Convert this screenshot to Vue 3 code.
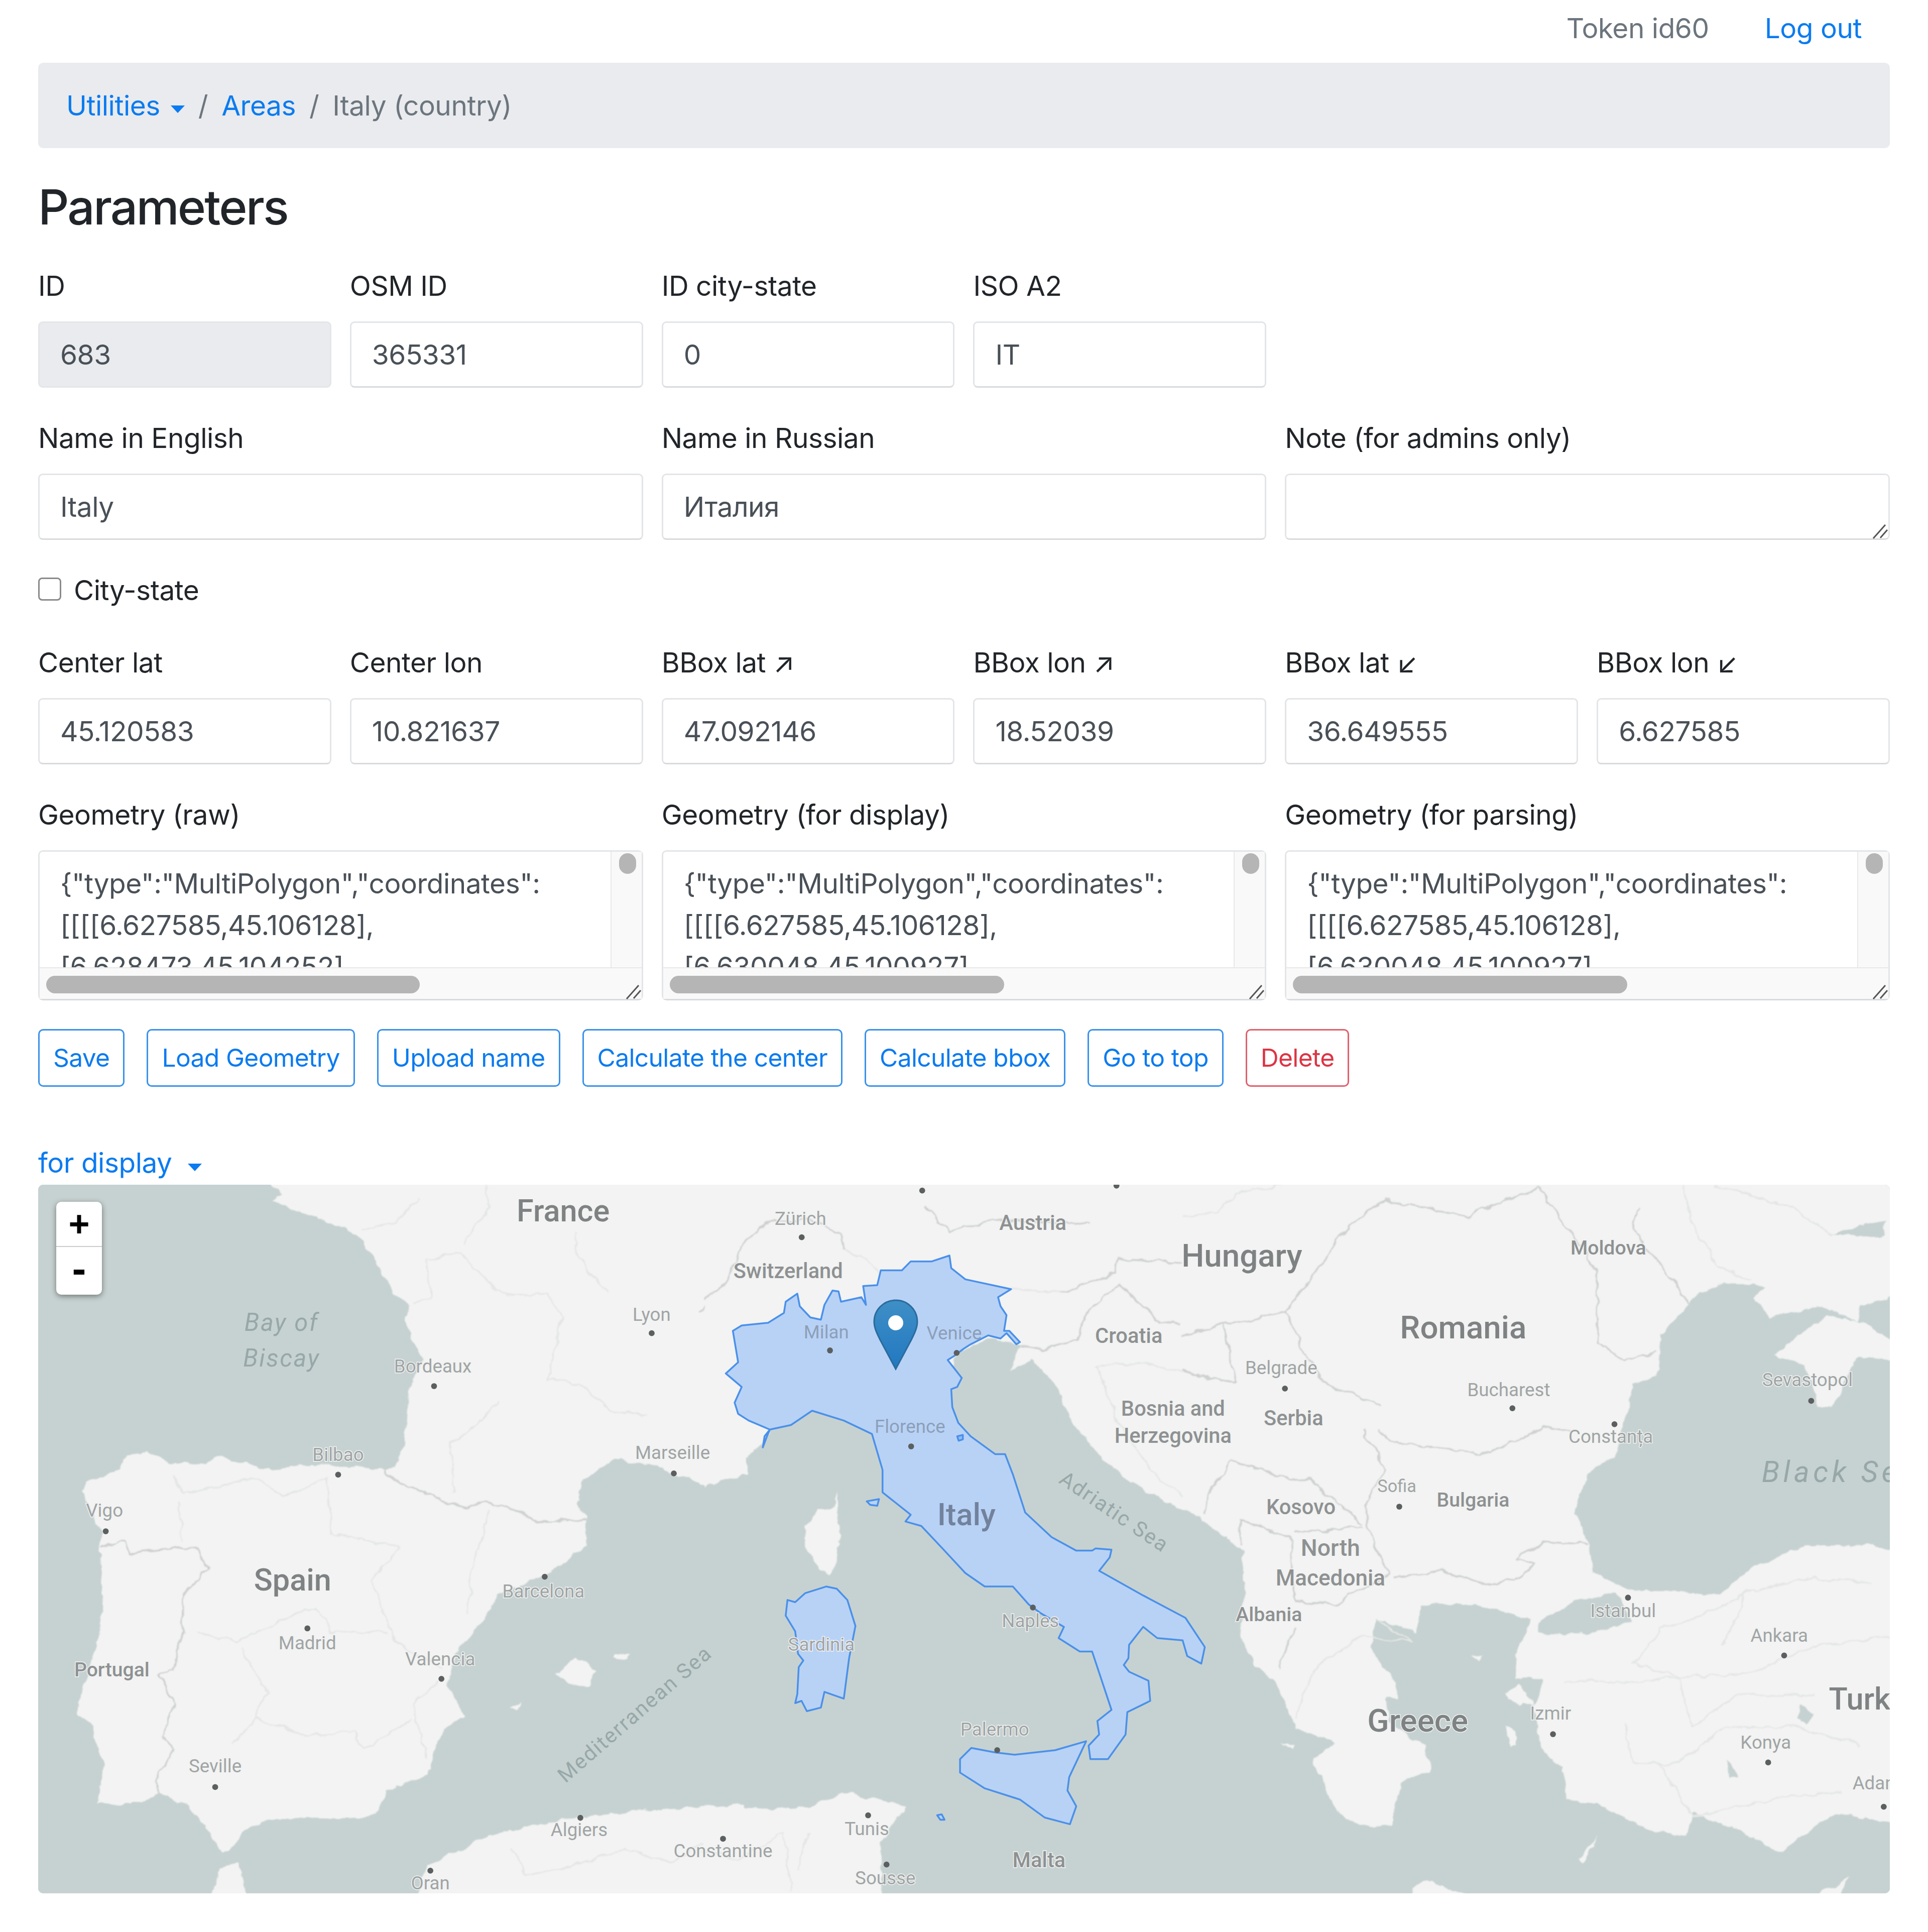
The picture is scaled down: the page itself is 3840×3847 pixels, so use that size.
<template>
  <div class="page">
    <nav class="top-nav">
      <span class="token">Token id60</span>
      <a class="logout" href="#">Log out</a>
    </nav>

    <ol class="crumbs">
      <li><a href="#">Utilities<i class="caret" /></a></li>
      <li class="sep">/</li>
      <li><a href="#">Areas</a></li>
      <li class="sep">/</li>
      <li class="current">Italy (country)</li>
    </ol>

    <h3 class="title">Parameters</h3>

    <form @submit.prevent>
      <div class="row">
        <div v-for="f in rowIds" :key="f.label" class="field span-2">
          <label>{{ f.label }}</label>
          <input class="control" type="text" :value="f.value" :disabled="f.disabled" />
        </div>
      </div>

      <div class="row">
        <div class="field span-4">
          <label>Name in English</label>
          <input class="control" type="text" value="Italy" />
        </div>
        <div class="field span-4">
          <label>Name in Russian</label>
          <input class="control" type="text" value="Италия" />
        </div>
        <div class="field span-4">
          <label>Note (for admins only)</label>
          <div class="area-wrap">
            <textarea class="control note" />
            <svg class="grip" viewBox="0 0 40 40"><path d="M7 37 31 10M21 36 35 20" /></svg>
          </div>
        </div>
      </div>

      <div class="check-row">
        <input id="cityState" class="check" type="checkbox" />
        <label for="cityState">City-state</label>
      </div>

      <div class="row">
        <div v-for="f in rowCoords" :key="f.label" class="field span-2">
          <label>{{ f.label }}</label>
          <input class="control" type="text" :value="f.value" />
        </div>
      </div>

      <div class="row">
        <div v-for="g in geometries" :key="g.label" class="field span-4">
          <label>{{ g.label }}</label>
          <div class="area-wrap">
            <textarea class="control geo" wrap="off" :value="g.text" />
            <span class="track-v"><i class="thumb-v" /></span>
            <span class="track-h"><i class="thumb-h" :style="{ width: g.thumb + 'px' }" /></span>
            <svg class="grip" viewBox="0 0 40 40"><path d="M7 37 31 10M21 36 35 20" /></svg>
          </div>
        </div>
      </div>

      <div class="actions">
        <button v-for="b in buttons" :key="b" type="button" class="btn">{{ b }}</button>
        <button type="button" class="btn danger">Delete</button>
      </div>
    </form>

    <a class="layer-toggle" href="#">for display<i class="caret wide" /></a>

    <div class="map">
      <svg class="map-svg" viewBox="0 0 3688 1411" preserveAspectRatio="none">
        <defs>
          <filter id="rough" filterUnits="userSpaceOnUse" x="-40" y="-40" width="3768" height="1491">
            <feTurbulence type="fractalNoise" baseFrequency=".035" numOctaves="3" seed="4" />
            <feDisplacementMap in="SourceGraphic" scale="16" xChannelSelector="R" yChannelSelector="G" />
            <feGaussianBlur stdDeviation="1.3" />
          </filter>
          <linearGradient id="pin" x1="0" y1="0" x2="0" y2="1">
            <stop offset="0" stop-color="#3f8fc6" />
            <stop offset="1" stop-color="#2178c0" />
          </linearGradient>
        </defs>

        <rect width="3688" height="1411" fill="#c6d2d1" />

        <g filter="url(#rough)">
          <g v-for="grp in shapes" :key="grp.id" :transform="grp.transform">
            <polygon v-for="(p, i) in grp.land" :key="i" :points="p" class="land" />
            <polygon v-for="(p, i) in grp.water" :key="'w' + i" :points="p" class="water" />
            <polyline v-for="(p, i) in grp.thin" :key="'t' + i" :points="p" class="border-thin" />
            <polyline v-for="(p, i) in grp.bold" :key="'b' + i" :points="p" class="border-bold" />
          </g>
        </g>

        <g transform="translate(1324,41) scale(.7015,.893)">
          <polygon v-for="(p, i) in italy" :key="i" :points="p" class="land-solid" />
          <polygon v-for="(p, i) in italy" :key="'i' + i" :points="p" class="italy" />
        </g>

        <g transform="translate(-76,-2359) scale(2.449)">
          <circle v-for="(d, i) in dots" :key="i" :cx="d[0]" :cy="d[1]" r="2.4" fill="#5b5f60" />
          <text
              v-for="l in labels"
              :key="l.t"
              :x="l.x"
              :y="l.y"
              :font-size="l.s"
              :class="['map-label', l.c]"
              :transform="l.r ? `rotate(${l.r} ${l.x} ${l.y})` : null"
          >{{ l.t }}</text>
        </g>

        <g class="marker">
          <path d="M1708 230c-24 0-43 19-43 43 0 12 6 24 12 36l31 58 31-58c6-12 12-24 12-36 0-24-19-43-43-43z" />
          <circle cx="1708" cy="275" r="15" fill="#fff" />
        </g>
      </svg>

      <div class="zoom-box">
        <a class="zoom-btn" href="#">+</a>
        <a class="zoom-btn minus" href="#">-</a>
      </div>
    </div>
  </div>
</template>

<script setup>
const rowIds = [
  { label: 'ID', value: '683', disabled: true },
  { label: 'OSM ID', value: '365331' },
  { label: 'ID city-state', value: '0' },
  { label: 'ISO A2', value: 'IT' },
]

const rowCoords = [
  { label: 'Center lat', value: '45.120583' },
  { label: 'Center lon', value: '10.821637' },
  { label: 'BBox lat ↗', value: '47.092146' },
  { label: 'BBox lon ↗', value: '18.52039' },
  { label: 'BBox lat ↙', value: '36.649555' },
  { label: 'BBox lon ↙', value: '6.627585' },
]

const geoText = (third) => ['{"type":"MultiPolygon","coordinates":', '[[[[6.627585,45.106128],', third].join('\n')

const geometries = [
  { label: 'Geometry (raw)', text: geoText('[6.628473,45.104252],'), thumb: 744 },
  { label: 'Geometry (for display)', text: geoText('[6.630048,45.100927],'), thumb: 666 },
  { label: 'Geometry (for parsing)', text: geoText('[6.630048,45.100927],'), thumb: 666 },
]

const buttons = ['Save', 'Load Geometry', 'Upload name', 'Calculate the center', 'Calculate bbox', 'Go to top']

const shapes = [
  {
    id: 'west',
    transform: 'translate(0,1) scale(.8992)',
    land: [
      '515,-30 515,0 540,20 520,35 560,55 640,80 710,110 745,170 790,240 825,265 815,300 830,345 855,385 830,430 815,500 810,570 790,625 770,632 680,620 600,622 520,630 460,615 405,600 350,620 290,615 240,585 195,600 180,630 105,660 100,680 125,740 145,770 135,810 145,880 135,1000 100,1110 85,1170 120,1200 145,1290 130,1370 210,1370 265,1350 330,1370 370,1420 410,1480 470,1420 540,1400 680,1405 745,1395 775,1340 860,1305 870,1270 900,1200 945,1175 905,1110 925,1040 995,950 1020,905 1130,860 1215,800 1215,745 1200,700 1205,650 1250,625 1290,605 1350,620 1410,640 1480,665 1568,640 1568,-30',
      '830,1600 860,1510 1000,1440 1130,1410 1270,1390 1420,1380 1568,1370 1568,1600',
      '380,1600 400,1510 445,1500 470,1600',
      '1145,1080 1195,1045 1235,1075 1220,1110 1190,1110',
      '1275,1035 1310,1040 1305,1050 1275,1045',
      '1045,1160 1070,1145 1060,1165',
    ],
    thin: [
      '830,260 870,250 860,165 935,150 1000,220 1040,245 1130,240 1160,290 1130,430 1200,440 1270,500 1350,510',
      '1190,100 1190,150 1260,240',
      '840,30 790,80 720,100',
      '990,0 1000,50 940,130',
      '1020,480 950,550 915,570 920,680',
      '300,640 320,680 490,650 540,690 640,650 650,770 800,800 740,880 790,1010 895,1070',
      '310,700 320,790',
      '350,990 440,1010 590,940 620,940 650,990 770,990',
      '450,1030 510,1120 480,1180 430,1240',
      '480,1180 600,1220 700,1210 720,1250 830,1180',
      '1000,720 960,860 950,950',
      '890,1100 830,1150 860,1270',
      '1050,1470 1080,1530 1200,1500 1300,1470 1400,1500 1500,1440',
    ],
    bold: [
      '770,632 800,660 870,690 950,712 990,700 1060,720 1110,745 1215,742',
      '140,800 195,785 205,815 345,800 375,850 320,910 320,990 300,1075 270,1080 300,1150 275,1220 305,1250 265,1300 265,1355',
      '1465,280 1490,240 1500,170 1568,110',
    ],
  },
  {
    id: 'centre',
    transform: 'translate(1324,41) scale(.7015,.893)',
    land: [
      '0,-80 1568,-80 1568,800 1510,760 1400,690 1260,640 1140,570 1050,480 1000,400 930,340 870,370 900,310 800,300 720,330 700,400 480,470 310,430 190,490 170,535 60,600 0,630',
      '378,640 385,700 392,740 365,825 330,810 295,760 290,715 330,680 370,670',
      '0,1345 60,1340 200,1345 300,1340 420,1305 470,1320 575,1340 545,1375 505,1420 510,1600 0,1600',
    ],
    thin: [
      '400,100 480,130 505,145',
      '875,187 1010,195',
      '1120,360 1240,350 1470,390',
      '1120,360 1170,470 1270,590 1360,650 1440,620 1520,680',
      '0,1440 100,1460 230,1400 250,1530',
      '300,1400 270,1480',
    ],
    bold: [
      '0,210 60,180 120,80 180,40 290,30 390,60 400,100',
      '900,310 960,320 1060,300 1090,240 1180,180 1300,260 1440,270 1500,340 1568,370',
      '1010,195 1170,150 1180,120 1380,130',
      '630,0 700,60 830,30 1100,40',
    ],
  },
  {
    id: 'east',
    transform: 'translate(2278,1) scale(.8992)',
    land: [
      '0,-30 1600,-30 1600,240 1500,270 1500,300 1420,270 1300,290 1265,250 1290,225 1200,215 1150,240 1060,330 1055,420 1000,440 960,600 900,640 870,730 905,800 910,860 1000,900 1120,900 1190,905 1260,850 1380,800 1530,795 1600,820 1600,1420 1450,1390 1320,1480 1240,1430 1130,1390 1120,1440 1040,1430 920,1370 850,1360 840,1290 790,1230 780,1150 800,1090 740,1090 740,1040 760,1000 770,960 650,930 530,930 520,990 430,960 420,1020 470,1100 480,1140 450,1130 460,1190 540,1240 550,1300 490,1320 460,1420 400,1420 345,1390 290,1270 340,1235 300,1225 250,1200 210,1100 160,1060 130,1000 140,880 130,800 50,740 0,700',
      '1310,375 1400,310 1440,290 1500,300 1600,360 1600,390 1500,380 1440,490 1410,490 1380,400',
      '715,1125 750,1105 780,1150 745,1150',
      '715,1200 735,1200 740,1240 725,1245',
      '880,1490 925,1440 890,1500',
      '510,1600 510,1555 540,1540 600,1560 700,1600',
      '1370,1600 1480,1530 1440,1600',
      '220,1235 250,1240 245,1250',
      '640,1040 665,1040 660,1055',
    ],
    water: [
      '790,970 870,920 960,905 1000,970 900,990 790,990',
      '1500,90 1560,80 1555,110 1440,110',
      '1370,1150 1400,1170 1385,1195 1365,1185',
      '1205,1270 1235,1310 1215,1310',
    ],
    thin: [
      '0,70 80,60 120,20 220,0',
      '1110,0 1130,90 1190,180 1260,210',
      '1180,0 1350,50 1440,110',
      '1260,900 1160,950 1060,980 1000,1060 1100,1090 1260,1080 1400,1020 1568,1000',
      '850,1100 1000,1100 1100,1090 1130,1200 1230,1130 1400,1130',
      '980,1190 1000,1280 1100,1280 1200,1200 1360,1200 1500,1240',
      '1060,1280 1130,1400 1310,1360 1460,1340',
      '1200,1020 1250,900 1400,870 1530,880',
      '300,1060 400,1000 510,1010 430,960',
      '300,1060 250,1180',
    ],
    bold: [
      '0,330 90,310 230,280 370,90 450,30 630,70 790,5',
      '90,310 110,390 120,440',
      '230,280 270,370 320,440 400,470 440,490',
      '400,540 450,630 410,700 410,760 460,860',
      '440,540 470,570 680,595 800,535 860,545',
      '790,5 860,100 920,190 920,350 980,390 1050,370',
      '1010,50 1000,100 1070,190 1130,270',
      '470,870 580,855 680,885 750,870 780,840 740,830 800,790 900,795',
      '130,800 130,740 240,780 250,920 340,930 460,860',
      '250,770 400,755',
      '110,610 240,650 280,650 400,750',
      '250,980 210,1070',
      '120,440 0,410',
      '110,610 60,680 50,730',
    ],
  },
]

const italy = [
  '85,280 110,268 185,262 230,240 235,215 268,197 275,225 305,250 335,255 345,222 368,190 385,192 392,215 450,205 463,222 455,180 495,178 505,145 565,145 590,125 650,125 700,112 705,140 745,165 875,187 838,205 845,225 862,245 855,280 870,280 900,305 890,310 862,285 845,297 810,290 760,310 740,320 715,335 695,345 720,370 735,385 722,405 705,410 708,450 725,485 760,515 830,555 858,555 880,600 915,685 990,740 1060,770 1105,770 1115,765 1160,768 1155,785 1125,815 1250,870 1370,920 1425,985 1415,1022 1375,1005 1362,970 1290,965 1250,940 1210,980 1208,1010 1195,1025 1210,1040 1265,1060 1270,1105 1205,1130 1200,1180 1150,1235 1100,1235 1095,1205 1125,1180 1120,1150 1160,1125 1105,995 1070,995 1010,965 1025,940 960,910 925,890 880,850 800,850 745,820 680,765 620,715 575,705 590,690 510,640 510,590 480,510 400,480 310,458 250,490 190,500 182,515 170,540 175,515 190,500 130,480 100,465 90,440 110,405 65,375 100,350',
  '240,880 262,885 290,865 350,850 380,855 410,880 433,938 415,1010 400,1100 345,1085 335,1120 295,1128 280,1105 262,1110 268,1090 272,1030 285,1015 270,1000 262,950 235,915',
  '730,1235 762,1210 830,1220 885,1225 1000,1215 1088,1195 1040,1275 1035,1305 1060,1340 1042,1380 970,1365 900,1325 800,1300 730,1265',
  '465,660 500,655 495,670 475,668',
  '722,515 738,512 738,522 726,525',
  '665,1360 678,1358 686,1370 674,1370',
]

const dots = [
  [750, 968], [908, 964], [652, 1006], [530, 1084], [675, 1098], [778, 1100], [353, 1127], [741, 1176],
  [548, 1198], [275, 1199], [1045, 1129], [1230, 1145], [1473, 1139], [1313, 1158], [86, 1245], [1138, 1225],
  [443, 1282], [250, 1324], [1324, 1299], [840, 1307], [1451, 1346], [359, 1365], [1263, 1410], [811, 1423],
  [1438, 1433], [175, 1453], [1532, 1469], [472, 1478], [706, 1476], [588, 1495], [721, 1516], [350, 1521],
]

const labels = [
  { t: 'France', x: 458, y: 993, s: 25, c: 'major' },
  { t: 'Zürich', x: 651, y: 996, s: 15 },
  { t: 'Austria', x: 840, y: 1000, s: 17, c: 'state' },
  { t: 'Hungary', x: 1010, y: 1030, s: 26, c: 'major' },
  { t: 'Moldova', x: 1308, y: 1020, s: 16, c: 'state' },
  { t: 'Switzerland', x: 641, y: 1039, s: 17, c: 'state' },
  { t: 'Lyon', x: 530, y: 1074, s: 15 },
  { t: 'Milan', x: 672, y: 1088, s: 15, c: 'over' },
  { t: 'Venice', x: 776, y: 1089, s: 15, c: 'over' },
  { t: 'Croatia', x: 918, y: 1092, s: 17, c: 'state' },
  { t: 'Romania', x: 1190, y: 1088, s: 26, c: 'major' },
  { t: 'Belgrade', x: 1042, y: 1117, s: 15 },
  { t: 'Bay of', x: 229, y: 1082, s: 20, c: 'sea' },
  { t: 'Biscay', x: 229, y: 1111, s: 20, c: 'sea' },
  { t: 'Bordeaux', x: 352, y: 1116, s: 15 },
  { t: 'Bosnia and', x: 954, y: 1151, s: 17, c: 'state' },
  { t: 'Herzegovina', x: 954, y: 1173, s: 17, c: 'state' },
  { t: 'Bucharest', x: 1227, y: 1135, s: 15 },
  { t: 'Serbia', x: 1052, y: 1159, s: 17, c: 'state' },
  { t: 'Sevastopol', x: 1470, y: 1127, s: 15 },
  { t: 'Florence', x: 740, y: 1165, s: 15, c: 'over' },
  { t: 'Constanța', x: 1310, y: 1173, s: 15 },
  { t: 'Black Sea', x: 1497, y: 1205, s: 24, c: 'sea wide' },
  { t: 'Marseille', x: 547, y: 1186, s: 15 },
  { t: 'Bilbao', x: 275, y: 1188, s: 15 },
  { t: 'Adriatic Sea', x: 903, y: 1234, s: 17, c: 'sea-plain', r: 34 },
  { t: 'Italy', x: 786, y: 1240, s: 25, c: 'major over-major' },
  { t: 'Vigo', x: 85, y: 1233, s: 15 },
  { t: 'Sofia', x: 1136, y: 1213, s: 14 },
  { t: 'Bulgaria', x: 1198, y: 1225, s: 16, c: 'state' },
  { t: 'Kosovo', x: 1058, y: 1231, s: 17, c: 'state' },
  { t: 'North', x: 1082, y: 1265, s: 19, c: 'state' },
  { t: 'Macedonia', x: 1082, y: 1289, s: 18, c: 'state' },
  { t: 'Spain', x: 238, y: 1293, s: 25, c: 'major' },
  { t: 'Barcelona', x: 442, y: 1299, s: 15 },
  { t: 'Albania', x: 1032, y: 1318, s: 16, c: 'state' },
  { t: 'Istanbul', x: 1320, y: 1315, s: 15 },
  { t: 'Naples', x: 838, y: 1323, s: 15 },
  { t: 'Sardinia', x: 668, y: 1342, s: 15 },
  { t: 'Madrid', x: 250, y: 1341, s: 15 },
  { t: 'Ankara', x: 1447, y: 1335, s: 15 },
  { t: 'Valencia', x: 358, y: 1354, s: 15 },
  { t: 'Portugal', x: 91, y: 1363, s: 16, c: 'state' },
  { t: 'Turkey', x: 1525, y: 1390, s: 25, c: 'major' },
  { t: 'Izmir', x: 1261, y: 1398, s: 15 },
  { t: 'Greece', x: 1153, y: 1408, s: 26, c: 'major' },
  { t: 'Palermo', x: 809, y: 1411, s: 15 },
  { t: 'Konya', x: 1436, y: 1422, s: 15 },
  { t: 'Seville', x: 175, y: 1441, s: 15 },
  { t: 'Adana', x: 1528, y: 1455, s: 15 },
  { t: 'Algiers', x: 471, y: 1493, s: 15 },
  { t: 'Tunis', x: 705, y: 1492, s: 15 },
  { t: 'Constantine', x: 588, y: 1510, s: 15 },
  { t: 'Malta', x: 845, y: 1518, s: 17, c: 'state' },
  { t: 'Sousse', x: 720, y: 1532, s: 15 },
  { t: 'Oran', x: 350, y: 1536, s: 15 },
  { t: 'Mediterranean Sea', x: 520, y: 1398, s: 17, c: 'sea-plain', r: -41 },
]
</script>

<style>
body {
  background: #fff;
}
</style>

<style scoped>
* {
  box-sizing: border-box;
}

.page {
  width: 3840px;
  padding: 0 76px 77px;
  font-family: Inter, 'Liberation Sans', sans-serif;
  font-size: 55px;
  line-height: 82px;
  color: #212529;
  letter-spacing: -0.009em;
}

a {
  color: #0a7bf0;
  text-decoration: none;
}

.top-nav {
  height: 125px;
  display: flex;
  justify-content: flex-end;
  align-items: center;
  gap: 111px;
  padding: 0 56px 14px 0;
}

.token {
  color: #6c757d;
}

.crumbs {
  list-style: none;
  margin: 0 0 60px;
  height: 170px;
  padding: 0 56px;
  display: flex;
  align-items: center;
  gap: 27px;
  background: #e9ebee;
  border-radius: 10px;
}

.sep,
.current {
  color: #6c757d;
}

.caret {
  display: inline-block;
  margin-left: 21px;
  vertical-align: 5px;
  border-top: 15px solid #0a7bf0;
  border-left: 14px solid transparent;
  border-right: 14px solid transparent;
}

.caret.wide {
  margin-left: 32px;
  vertical-align: 3px;
}

.title {
  margin: 0 0 58px;
  font-size: 96px;
  line-height: 115px;
  font-weight: 500;
  letter-spacing: -0.03em;
}

.row {
  display: grid;
  grid-template-columns: repeat(12, 1fr);
  column-gap: 37px;
  margin-bottom: 59px;
}

.span-2 {
  grid-column: span 2;
}

.span-4 {
  grid-column: span 4;
}

.field label {
  display: block;
  margin-bottom: 30px;
}

.control {
  display: block;
  width: 100%;
  height: 132px;
  padding: 0 41px;
  font: inherit;
  letter-spacing: inherit;
  color: #495057;
  background: #fff;
  border: 3px solid #e3e5e8;
  border-bottom-color: #d8dadd;
  border-radius: 9px;
  outline: none;
}

.control:disabled {
  background: #e9ebee;
  border-color: #e4e6e9;
  opacity: 1;
}

.area-wrap {
  position: relative;
  overflow: hidden;
  border-radius: 9px;
}

.note {
  resize: none;
}

.geo {
  height: 299px;
  padding: 22px 41px 0;
  line-height: 83px;
  resize: none;
  overflow: hidden;
}

.track-v,
.track-h {
  position: absolute;
  background: #f9f9f9;
  pointer-events: none;
}

.track-v {
  top: 3px;
  right: 3px;
  bottom: 3px;
  width: 62px;
  border-left: 2px solid #e8e8e8;
}

.track-h {
  left: 3px;
  right: 3px;
  bottom: 3px;
  height: 63px;
  border-top: 2px solid #e8e8e8;
}

.thumb-v,
.thumb-h {
  position: absolute;
  background: #b5b5b5;
  border-radius: 18px;
}

.thumb-v {
  top: 3px;
  left: 15px;
  width: 34px;
  height: 41px;
}

.thumb-h {
  top: 15px;
  left: 13px;
  height: 35px;
}

.grip {
  position: absolute;
  right: 0;
  bottom: 0;
  width: 40px;
  height: 40px;
  pointer-events: none;
}

.grip path {
  fill: none;
  stroke: #555;
  stroke-width: 3;
}

.check-row {
  display: flex;
  align-items: center;
  gap: 25px;
  margin-bottom: 62px;
}

.check {
  appearance: none;
  margin: 0 0 4px;
  width: 46px;
  height: 46px;
  background: #fff;
  border: 3px solid #8a8a8a;
  border-radius: 8px;
}

.actions {
  display: flex;
  gap: 44px;
  margin: -2px 0 110px;
}

.btn {
  height: 115px;
  padding: 0 27px;
  font: inherit;
  font-size: 49.8px;
  line-height: 1;
  letter-spacing: -0.7px;
  color: #0a7bf0;
  background: #fff;
  border: 3px solid #3a92ea;
  border-radius: 10px;
}

.btn.danger {
  color: #dc3545;
  border-color: #e0606c;
}

.layer-toggle {
  display: block;
  margin-bottom: 3px;
}

.map {
  position: relative;
  height: 1411px;
  border-radius: 10px;
  overflow: hidden;
  background: #c6d2d1;
}

.map-svg {
  display: block;
  width: 100%;
  height: 100%;
}

.land,
.land-solid {
  fill: #f2f3f2;
}

.water {
  fill: #c6d2d1;
}

.border-thin,
.border-bold {
  fill: none;
  vector-effect: non-scaling-stroke;
}

.border-thin {
  stroke: #e4e6e5;
  stroke-width: 3;
}

.border-bold {
  stroke: #cfd1d0;
  stroke-width: 3.5;
}

.italy {
  fill: #3388ff;
  fill-opacity: 0.3;
  stroke: #4a90ea;
  stroke-width: 3.5;
  stroke-linejoin: round;
  vector-effect: non-scaling-stroke;
}

.map-label {
  font-family: Roboto, 'Liberation Sans', sans-serif;
  fill: #a0a4a5;
  text-anchor: middle;
  letter-spacing: 0;
  stroke: #f2f3f2;
  stroke-width: 1.2px;
  paint-order: stroke;
}

.state {
  fill: #8e9192;
  font-weight: 500;
}

.major {
  fill: #7f8283;
  font-weight: 500;
}

.over {
  fill: #8d9fb8;
  stroke: none;
}

.over-major {
  fill: #72829c;
  stroke: none;
}

.sea,
.sea-plain {
  fill: #98a8a8;
  stroke: none;
  letter-spacing: 1px;
}

.sea {
  font-style: italic;
}

.map-label.wide {
  letter-spacing: 3px;
}

.marker path {
  fill: url(#pin);
  stroke: #2a6c9c;
  stroke-width: 3;
}

.zoom-box {
  position: absolute;
  left: 36px;
  top: 34px;
  width: 91px;
  height: 185px;
  display: flex;
  flex-direction: column;
  background: #fff;
  border-radius: 10px;
  box-shadow: 0 3px 12px rgba(0, 0, 0, 0.45);
}

.zoom-btn {
  flex: 1;
  display: flex;
  align-items: center;
  justify-content: center;
  font-family: 'Liberation Sans', sans-serif;
  font-weight: 700;
  font-size: 72px;
  line-height: 1;
  letter-spacing: 0;
  color: #000;
}

.zoom-btn.minus {
  border-top: 2px solid #ccc;
  font-size: 84px;
  padding-bottom: 8px;
}
</style>
